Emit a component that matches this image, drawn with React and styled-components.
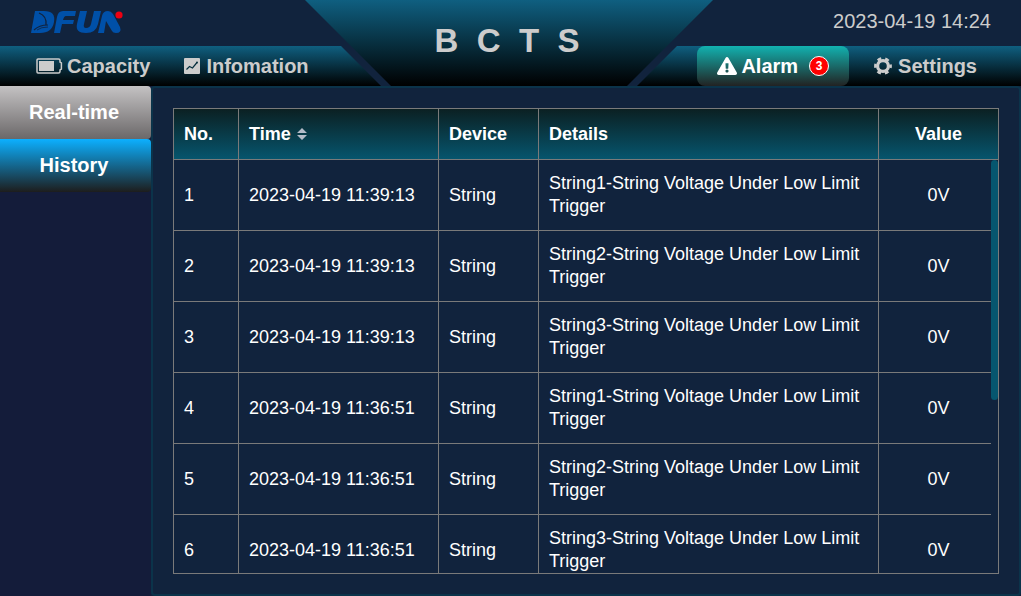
import styled, { createGlobalStyle } from "styled-components";
import { FaExclamationTriangle } from "react-icons/fa";

const GlobalStyle = createGlobalStyle`
  * {
    box-sizing: border-box;
  }

  body {
    margin: 0;
    background: #11233d;
    color: #ffffff;
    font-family: "Liberation Sans", Arial, sans-serif;
  }
`;

const Page = styled.div`
  display: flex;
  flex-direction: column;
  height: 100vh;
`;

const Header = styled.header`
  display: grid;
  grid-template-columns: 381fr 256px 384fr;
  height: 86px;
  flex-shrink: 0;
  color: #cccccc;
`;

const HeaderSide = styled.div`
  display: grid;
  grid-template-rows: 46px 40px;
`;

const LogoBox = styled.div`
  padding: 11px 30px 0;
`;

const StyledLogo = styled.svg`
  display: block;
`;

const Clock = styled.time`
  justify-self: end;
  padding: 9px 30px 0;
  font-size: 20px;
  line-height: 24px;
`;

const Nav = styled.nav`
  display: flex;
  align-items: stretch;
  justify-content: ${(props) => props.$justify};
  gap: ${(props) => props.$gap};
  padding: ${(props) => props.$padding};
  background: linear-gradient(#0f5f80, #000000);
  clip-path: ${(props) =>
    props.$slant === "right"
      ? "polygon(0 0, calc(100% - 40px) 0, 100% 100%, 0 100%)"
      : "polygon(40px 0, 100% 0, 100% 100%, 0 100%)"};
`;

const NavLink = styled.a`
  display: flex;
  align-items: center;
  gap: 4px;
  padding: 0 ${(props) => (props.$active ? 20 : 17)}px;
  border-radius: 8px;
  background: ${(props) =>
    props.$active ? "linear-gradient(#12b2b0, #222222)" : "none"};
  color: ${(props) => (props.$active ? "#ffffff" : "#cccccc")};
  font-size: 20px;
  font-weight: bold;
  line-height: 24px;
  text-decoration: none;
`;

const Badge = styled.span`
  width: 20px;
  height: 20px;
  margin-left: 7px;
  border: 1px solid #ffffff;
  border-radius: 50%;
  background: #ff0000;
  font-size: 12px;
  line-height: 18px;
  text-align: center;
`;

const Title = styled.h1`
  margin: 0 -76px;
  padding: 22px 4px 0 0;
  background: linear-gradient(#0f5f80, #000000);
  clip-path: polygon(0 0, 100% 0, calc(100% - 86px) 100%, 86px 100%);
  font-size: 33px;
  line-height: 38px;
  text-align: center;
  white-space: pre;
`;

const Content = styled.div`
  display: flex;
  flex: 1;
  min-height: 0;
`;

const Sidebar = styled.aside`
  width: 151px;
  flex-shrink: 0;
  background: #141c3a;
`;

const SideButton = styled.button`
  display: block;
  width: 100%;
  height: 53px;
  padding: 0 3px 0 0;
  border: none;
  border-radius: 0 4px 4px 0;
  background: ${(props) =>
    props.$active
      ? "linear-gradient(#c4c2c3, #6b6869)"
      : "linear-gradient(#0cb0ff, #1d1d1d)"};
  color: #ffffff;
  font-family: inherit;
  font-size: 20px;
  font-weight: bold;
  cursor: pointer;
`;

const Panel = styled.main`
  display: flex;
  flex: 1;
  min-width: 0;
  padding: 20px;
  border: 2px solid #0b334a;
  border-radius: 4px;
`;

const TableFrame = styled.div`
  position: relative;
  flex: 1;
  overflow: hidden;
  border: 1px solid #7a7a7a;
`;

const Table = styled.table`
  width: 100%;
  table-layout: fixed;
  border-collapse: separate;
  border-spacing: 0;
  font-size: 18px;
  line-height: 23px;
`;

const HeadRow = styled.tr`
  background: linear-gradient(#0b2022, #06566f);
`;

const HeadCell = styled.th`
  width: ${(props) => props.$width};
  height: 51px;
  padding: 0 10px;
  border-right: 1px solid #7a7a7a;
  border-bottom: 1px solid #7a7a7a;
  text-align: ${(props) => props.$align || "left"};

  &:last-child {
    border-right: none;
  }
`;

const SortLabel = styled.span`
  display: flex;
  align-items: center;
  gap: 6px;
`;

const Cell = styled.td`
  height: 71px;
  padding: 0 10px;
  border-right: 1px solid #7a7a7a;
  border-bottom: 1px solid #7a7a7a;
  text-align: ${(props) => props.$align || "left"};

  &:last-child {
    border-right: none;
  }
`;

const ScrollTrack = styled.div`
  position: absolute;
  top: 51px;
  right: 0;
  bottom: 0;
  width: 7px;
  background: #11233d;
`;

const ScrollThumb = styled.div`
  height: 58%;
  border-radius: 4px;
  background: #06566f;
`;

const alarms = [
  { no: 1, time: "2023-04-19 11:39:13", string: 1 },
  { no: 2, time: "2023-04-19 11:39:13", string: 2 },
  { no: 3, time: "2023-04-19 11:39:13", string: 3 },
  { no: 4, time: "2023-04-19 11:36:51", string: 1 },
  { no: 5, time: "2023-04-19 11:36:51", string: 2 },
  { no: 6, time: "2023-04-19 11:36:51", string: 3 },
];

function Logo() {
  return (
    <StyledLogo width="94" height="22" viewBox="0 0 94 22" role="img" aria-label="DFUN">
      <g fill="#0050a8">
        <path d="M5 0H14Q26 0 24 11Q22 22 10 22H1Z" />
        <path d="M33 0H46L45 5H36Q34 5 33 9H44L43 13H32L30 22H24L27 6Q28 0 33 0Z" />
        <path d="M50 0H57L54 13Q53 17 56 17Q60 17 61 13L64 0H71L68 13Q66 22 56 22Q45 22 47 13Z" />
        <path d="M72 5Q73 0 78 0Q81 0 83 3L90 16Q92 22 86 22Q83 22 82 20L76 10L74 22H68Z" />
      </g>
      <g fill="none" stroke="#11233d">
        <path d="M9 2Q17 5 16 14" strokeWidth="1.3" />
        <path d="M4 19Q9 14 18 14" strokeWidth="1.2" />
        <path d="M7 19Q11 16 18 16" strokeWidth="0.8" />
      </g>
      <circle cx="89" cy="4" r="3.6" fill="#ee0012" />
    </StyledLogo>
  );
}

function BatteryIcon() {
  return (
    <svg width="27" height="16" viewBox="0 0 27 16" aria-hidden="true">
      <path
        d="M2 1H22.5Q24 1 24 2.5V4L25.4 5V11L24 12V13.5Q24 15 22.5 15H2Q1 15 1 14V2Q1 1 2 1Z"
        fill="none"
        stroke="#cccccc"
        strokeWidth="1.5"
      />
      <rect x="3" y="3" width="15" height="10" fill="#cccccc" />
    </svg>
  );
}

function ChartIcon() {
  return (
    <svg width="18" height="16" viewBox="0 0 18 16" aria-hidden="true">
      <rect width="16" height="16" rx="1" fill="#cccccc" />
      <path d="M2.5 11.5L5.5 8.5L8.5 10L13 4.5" fill="none" stroke="#06303f" strokeWidth="1.2" />
      <circle cx="13" cy="4.5" r="1" fill="#06303f" />
    </svg>
  );
}

function GearIcon() {
  return (
    <svg width="20" height="18" viewBox="0 0 20 18" aria-hidden="true">
      <g fill="none" stroke="#cccccc">
        <circle cx="9" cy="9" r="5.4" strokeWidth="3.2" />
        <circle
          cx="9"
          cy="9"
          r="7.6"
          strokeWidth="2.6"
          strokeDasharray="3.9 4.06"
          strokeDashoffset="1.95"
        />
      </g>
    </svg>
  );
}

function SortIcon() {
  return (
    <svg width="10" height="12" viewBox="0 0 10 12" aria-hidden="true">
      <path d="M5 0L10 5H0ZM5 12L10 7H0Z" fill="#b4bcc8" />
    </svg>
  );
}

export default function App() {
  return (
    <>
      <GlobalStyle />
      <Page>
        <Header>
          <HeaderSide>
            <LogoBox>
              <Logo />
            </LogoBox>
            <Nav $slant="right" $justify="flex-start" $padding="0 0 0 19px">
              <NavLink href="#capacity">
                <BatteryIcon />
                Capacity
              </NavLink>
              <NavLink href="#information">
                <ChartIcon />
                Infomation
              </NavLink>
            </Nav>
          </HeaderSide>
          <Title>B  C  T  S</Title>
          <HeaderSide>
            <Clock>2023-04-19 14:24</Clock>
            <Nav
              $slant="left"
              $justify="flex-end"
              $gap="8px"
              $padding="0 27px 0 0"
            >
              <NavLink href="#alarm" $active>
                <FaExclamationTriangle size={20} />
                Alarm
                <Badge>3</Badge>
              </NavLink>
              <NavLink href="#settings">
                <GearIcon />
                Settings
              </NavLink>
            </Nav>
          </HeaderSide>
        </Header>
        <Content>
          <Sidebar>
            <SideButton $active>Real-time</SideButton>
            <SideButton>History</SideButton>
          </Sidebar>
          <Panel>
            <TableFrame>
              <Table>
                <thead>
                  <HeadRow>
                    <HeadCell $width="65px">No.</HeadCell>
                    <HeadCell $width="200px">
                      <SortLabel>
                        Time
                        <SortIcon />
                      </SortLabel>
                    </HeadCell>
                    <HeadCell $width="100px">Device</HeadCell>
                    <HeadCell $width="340px">Details</HeadCell>
                    <HeadCell $align="center">Value</HeadCell>
                  </HeadRow>
                </thead>
                <tbody>
                  {alarms.map((alarm) => (
                    <tr key={alarm.no}>
                      <Cell>{alarm.no}</Cell>
                      <Cell>{alarm.time}</Cell>
                      <Cell>String</Cell>
                      <Cell>
                        {`String${alarm.string}-String Voltage Under Low Limit Trigger`}
                      </Cell>
                      <Cell $align="center">0V</Cell>
                    </tr>
                  ))}
                </tbody>
              </Table>
              <ScrollTrack>
                <ScrollThumb />
              </ScrollTrack>
            </TableFrame>
          </Panel>
        </Content>
      </Page>
    </>
  );
}
